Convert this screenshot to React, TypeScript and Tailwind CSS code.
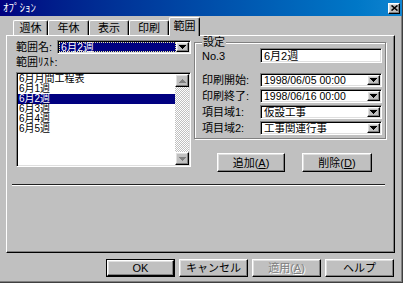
import React from 'react';

// win95-ish bevels
const raised =
  'border border-t-white border-l-white border-r-black border-b-black shadow-[inset_-1px_-1px_#808080,inset_1px_1px_#dfdfdf]';
const sunken =
  'border border-t-[#808080] border-l-[#808080] border-r-white border-b-white shadow-[inset_1px_1px_#000,inset_-1px_-1px_#dfdfdf]';

function Arrow({ up, color = '#000' }: { up?: boolean; color?: string }) {
  return (
    <svg width="7" height="4" viewBox="0 0 7 4" shapeRendering="crispEdges" className={up ? 'rotate-180' : ''}>
      <path d="M0 0h7v1h-1v1h-1v1h-1v1h-1v-1h-1v-1h-1v-1h-1z" fill={color} />
    </svg>
  );
}

function Combo({ value, className, focused }: { value: string; className: string; focused?: boolean }) {
  return (
    <div className={`${sunken} bg-white flex p-px ${className}`}>
      {focused ? (
        <div className="flex-1 flex items-center bg-[#000080] text-white border border-dotted border-[#e8e8a0] pl-px text-[10.5px] leading-[10px]">
          {value}
        </div>
      ) : (
        <div className="flex-1 flex items-center pl-[2px] whitespace-nowrap text-[10.5px] leading-[10px]">{value}</div>
      )}
      <div className={`${raised} bg-[#c0c0c0] w-[13px] flex items-center justify-center`}>
        <Arrow />
      </div>
    </div>
  );
}

function Button({
  children,
  className,
  isDefault,
  disabled,
}: {
  children: React.ReactNode;
  className: string;
  isDefault?: boolean;
  disabled?: boolean;
}) {
  const body = (
    <div
      className={`${raised} bg-[#c0c0c0] h-full flex items-center justify-center ${
        disabled ? 'text-[#808080] [text-shadow:1px_1px_#fff]' : ''
      }`}
    >
      {children}
    </div>
  );
  if (isDefault) {
    return <div className={`border border-black ${className}`}>{body}</div>;
  }
  return <div className={className}>{body}</div>;
}

const tabs = [
  { name: '週休', w: 'w-[35px]' },
  { name: '年休', w: 'w-[41px]' },
  { name: '表示', w: 'w-[40px]' },
  { name: '印刷', w: 'w-[40px]' },
];

const ranges = ['6月月間工程表', '6月1週', '6月2週', '6月3週', '6月4週', '6月5週'];

const settings = [
  { label: '印刷開始:', value: '1998/06/05 00:00' },
  { label: '印刷終了:', value: '1998/06/16 00:00' },
  { label: '項目域1:', value: '仮設工事' },
  { label: '項目域2:', value: '工事関連行事' },
];

export default function App() {
  return (
    <div className="w-[403px] h-[283px] bg-[#c0c0c0] flex flex-col border-r border-b border-r-[#404040] border-b-[#404040] shadow-[inset_-1px_-1px_#808080] font-['Liberation_Sans','Noto_Sans_CJK_JP',sans-serif] text-[11px] leading-[12px] text-black overflow-hidden">
      {/* title bar */}
      <div className="h-[16px] shrink-0 flex items-center bg-linear-to-r from-[#000080] to-[#1084d0] pl-[3px] pr-[2px]">
        <span className="flex-1 text-white">ｵﾌﾟｼｮﾝ</span>
        <div className={`${raised} bg-[#c0c0c0] w-[12px] h-[11px] flex items-center justify-center`}>
          <svg width="7" height="6" viewBox="0 0 7 6">
            <path d="M0.5 0.5L6.5 5.5M6.5 0.5L0.5 5.5" stroke="#000" strokeWidth="1.6" />
          </svg>
        </div>
      </div>

      <div className="flex flex-col pl-[6px] pt-px">
        {/* tabs */}
        <div className="flex items-end h-[18px] pl-[7px]">
          {tabs.map((t) => (
            <div
              key={t.name}
              className={`${t.w} h-[15px] flex items-center justify-center border-t border-l border-r border-t-white border-l-white border-r-black rounded-t-[2px] shadow-[inset_-1px_0_#808080]`}
            >
              {t.name}
            </div>
          ))}
          <div className="w-[31px] h-[19px] -mb-px relative z-10 bg-[#c0c0c0] flex items-start pt-[2px] justify-center border-t border-l border-r border-t-white border-l-white border-r-black rounded-t-[2px] shadow-[inset_-1px_0_#808080]">
            範囲
          </div>
        </div>

        {/* tab panel */}
        <div className="w-[389px] h-[218px] flex flex-col border border-t-white border-l-white border-r-black border-b-black shadow-[inset_-1px_-1px_#808080]">
          <div className="flex">
            {/* left column */}
            <div className="flex flex-col ml-[9px] mt-[4px] w-[175px]">
              <div className="flex items-center h-[14px]">
                <span className="w-[41px]">範囲名:</span>
                <Combo value="6月2週" className="w-[134px] h-[14px]" focused />
              </div>
              <div className="mt-[2px] h-[12px]">範囲ﾘｽﾄ:</div>
              <div className={`${sunken} bg-white mt-[4px] w-[175px] h-[95px] flex p-px`}>
                <div className="flex-1 flex flex-col">
                  {ranges.map((r, i) => (
                    <div
                      key={r}
                      className={`h-[10px] text-[10px] leading-[10px] pl-px whitespace-nowrap ${
                        i === 2 ? 'bg-[#000080] text-white' : ''
                      }`}
                    >
                      {r}
                    </div>
                  ))}
                </div>
                <div className="w-[14px] flex flex-col">
                  <div className={`${raised} bg-[#c0c0c0] h-[13px] flex items-center justify-center`}>
                    <Arrow up color="#808080" />
                  </div>
                  <div className="flex-1 bg-[repeating-conic-gradient(#c0c0c0_0_25%,#ffffff_0_50%)] bg-[length:2px_2px]" />
                  <div className={`${raised} bg-[#c0c0c0] h-[13px] flex items-center justify-center`}>
                    <Arrow color="#808080" />
                  </div>
                </div>
              </div>
            </div>

            {/* right column */}
            <div className="flex flex-col ml-[3px]">
              <fieldset className="w-[192px] h-[103px] border border-[#808080] shadow-[1px_1px_0_#fff,inset_1px_1px_0_#fff] pl-[7px] pr-[2px]">
                <legend className="px-px leading-[12px] bg-[#c0c0c0]">設定</legend>
                <div className="flex items-center h-[15px]">
                  <span className="w-[58px]">No.3</span>
                  <div className={`${sunken} bg-white w-[122px] h-[15px] flex items-center pl-[3px]`}>6月2週</div>
                </div>
                <div className="flex flex-col gap-[2px] mt-[10px]">
                  {settings.map((s) => (
                    <div key={s.label} className="flex items-center h-[14px]">
                      <span className="w-[58px] whitespace-nowrap">{s.label}</span>
                      <Combo value={s.value} className="w-[122px] h-[14px]" />
                    </div>
                  ))}
                </div>
              </fieldset>
              <div className="flex gap-[17px] mt-[14px] ml-[23px]">
                <Button className="w-[68px] h-[19px]">
                  追加(<u>A</u>)
                </Button>
                <Button className="w-[70px] h-[19px]">
                  削除(<u>D</u>)
                </Button>
              </div>
            </div>
          </div>

          {/* separator */}
          <div className="ml-[5px] mt-[12px] w-[373px] h-[2px] border-t border-b border-t-[#202020] border-b-white" />
        </div>

        {/* dialog buttons */}
        <div className="flex gap-[4px] ml-[100px] mt-[6px]">
          <Button className="w-[69px] h-[18px]" isDefault>
            OK
          </Button>
          <Button className="w-[69px] h-[18px]">キャンセル</Button>
          <Button className="w-[69px] h-[18px]" disabled>
            適用(<u>A</u>)
          </Button>
          <Button className="w-[69px] h-[18px]">ヘルプ</Button>
        </div>
      </div>
    </div>
  );
}
